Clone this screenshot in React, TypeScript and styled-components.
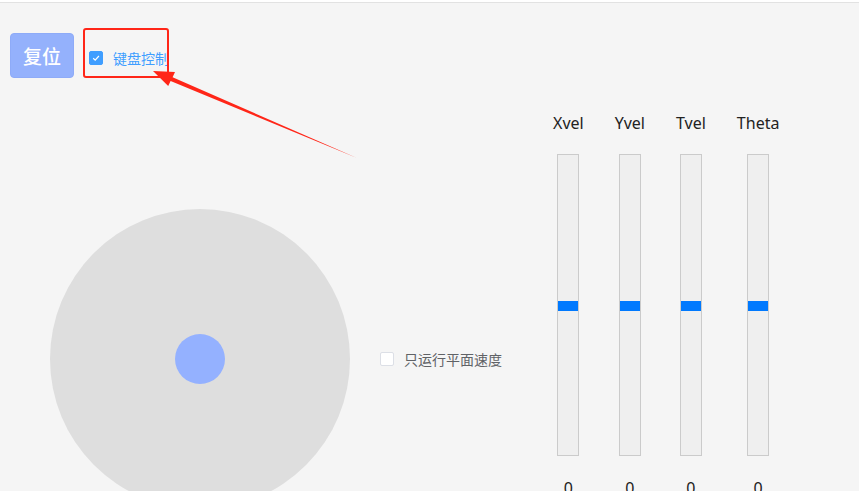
import styled, { createGlobalStyle } from "styled-components";

const GlobalStyle = createGlobalStyle`
  html, body {
    margin: 0;
    padding: 0;
    height: 100%;
    overflow: hidden;
    background: #ffffff;
  }
  body {
    font-family: "Noto Sans", "Noto Sans CJK SC", sans-serif;
  }
`;

const axes = ["Xvel", "Yvel", "Tvel", "Theta"];

function App() {
  return (
    <>
      <GlobalStyle />
      <Page>
        <Toolbar>
          <ResetButton>复位</ResetButton>
          <Annotated>
            <CheckLabel $checked>
              <Box $checked>
                <svg width="10" height="10" viewBox="0 0 10 10">
                  <path d="M2.2 5.2 L4.2 7.1 L7.9 3" fill="none" stroke="#fff" strokeWidth="1.2" />
                </svg>
              </Box>
              键盘控制
            </CheckLabel>
            <Frame />
          </Annotated>
        </Toolbar>

        <Main>
          <JoyPanel>
            <Pad>
              <Knob />
            </Pad>
            <CheckLabel>
              <Box />
              只运行平面速度
            </CheckLabel>
          </JoyPanel>

          <Sliders>
            {axes.map((name) => (
              <Column key={name}>
                <AxisName>{name}</AxisName>
                <Track>
                  <Thumb />
                </Track>
                <Value>0</Value>
              </Column>
            ))}
          </Sliders>
        </Main>

        {/* red annotation arrow */}
        <Arrow width="859" height="491" viewBox="0 0 859 491">
          <polygon
            points="357,158 172.6,77.3 175,72 153,71 168.2,86 170.6,81"
            fill="#ff2618"
          />
        </Arrow>
      </Page>
    </>
  );
}

export default App;

const Page = styled.div`
  position: relative;
  margin-top: 2px;
  height: 489px;
  border-top: 1px solid #e2e2e2;
  background: #f5f5f5;
  overflow: hidden;
`;

const Toolbar = styled.div`
  display: flex;
  align-items: center;
  gap: 15px;
  padding: 30px 10px 0;
`;

const ResetButton = styled.button`
  width: 64px;
  height: 45px;
  border: 1px solid #8eabf8;
  border-radius: 4px;
  background: #94b1fc;
  color: #ffffff;
  font-family: "Noto Sans CJK SC", sans-serif;
  font-size: 19px;
  font-weight: 500;
  cursor: pointer;
`;

const Annotated = styled.div`
  position: relative;
  margin-top: 5px;
`;

const Frame = styled.div`
  position: absolute;
  left: -6px;
  top: -20px;
  width: 82px;
  height: 46px;
  border: 2px solid #ff2618;
  border-radius: 3px;
  pointer-events: none;
`;

const CheckLabel = styled.label<{ $checked?: boolean }>`
  display: flex;
  align-items: center;
  gap: 10px;
  font-family: "Noto Sans CJK SC", sans-serif;
  font-size: 14px;
  color: ${(p) => (p.$checked ? "#409eff" : "#606266")};
  white-space: nowrap;
`;

const Box = styled.span<{ $checked?: boolean }>`
  display: flex;
  align-items: center;
  justify-content: center;
  box-sizing: border-box;
  width: 14px;
  height: 14px;
  border-radius: 2px;
  border: 1px solid ${(p) => (p.$checked ? "#409eff" : "#dcdfe6")};
  background: ${(p) => (p.$checked ? "#409eff" : "#ffffff")};
`;

const Main = styled.div`
  display: flex;
  align-items: flex-start;
`;

const JoyPanel = styled.div`
  flex-shrink: 0;
  box-sizing: border-box;
  width: 553px;
  display: flex;
  align-items: center;
  gap: 30px;
  padding: 131px 0 0 50px;
`;

const Pad = styled.div`
  flex-shrink: 0;
  width: 300px;
  height: 300px;
  border-radius: 50%;
  background: #dedede;
  display: flex;
  align-items: center;
  justify-content: center;
`;

const Knob = styled.div`
  width: 50px;
  height: 50px;
  border-radius: 50%;
  background: #94b1ff;
`;

const Sliders = styled.div`
  display: flex;
  gap: 31px;
  padding-top: 34px;
`;

const Column = styled.div`
  display: flex;
  flex-direction: column;
  align-items: center;
`;

const AxisName = styled.div`
  font-size: 16px;
  line-height: 22px;
  color: #222;
`;

const Track = styled.div`
  position: relative;
  box-sizing: border-box;
  margin-top: 20px;
  width: 22px;
  height: 302px;
  border: 1px solid #cbcbcb;
  background: #efefef;
  display: flex;
  align-items: center;
`;

const Thumb = styled.div`
  width: 100%;
  height: 10px;
  margin-top: 1px;
  background: #0079fe;
`;

const Value = styled.div`
  margin-top: 21px;
  font-size: 16px;
  line-height: 22px;
  color: #222;
`;

const Arrow = styled.svg`
  position: absolute;
  left: 0;
  top: -3px;
  pointer-events: none;
`;
